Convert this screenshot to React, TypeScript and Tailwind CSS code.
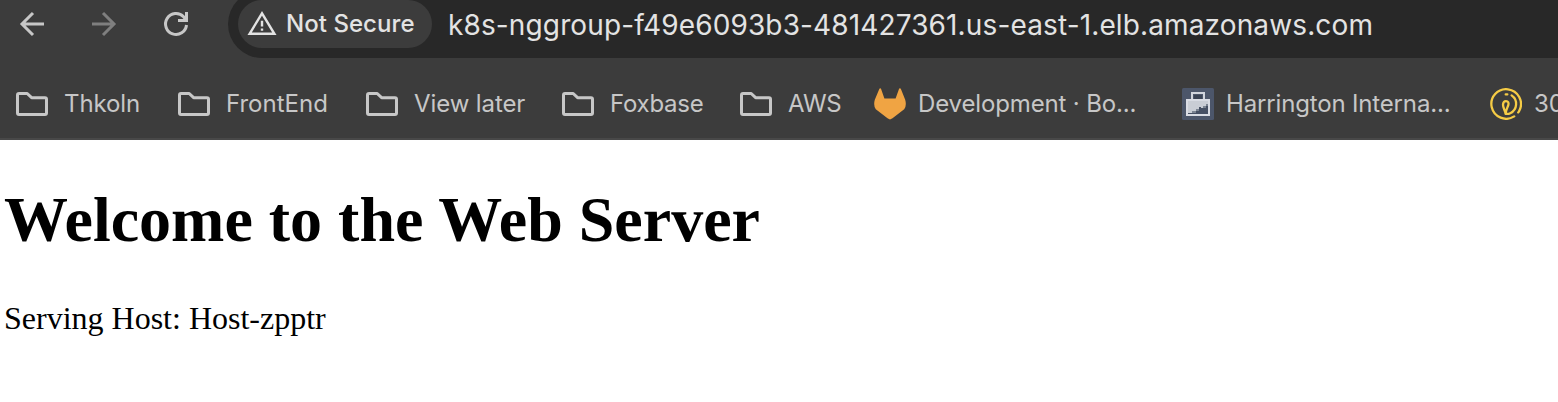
import React from 'react';

const Folder = () => (
  <svg className="block h-8 w-8 shrink-0" viewBox="0 0 32 32" fill="none" stroke="#c7c7c7" strokeWidth="3" strokeLinejoin="round">
    <path d="M3 5.5H11.2L15.6 9.7H29Q30.5 9.7 30.5 11.2V25Q30.5 26.5 29 26.5H3Q1.5 26.5 1.5 25V7Q1.5 5.5 3 5.5Z" />
  </svg>
);

const Fox = () => (
  <svg className="block h-8 w-8 shrink-0" viewBox="0 0 32 32" fill="#f0a443">
    <path d="M6.2 0.2Q6.8 0.2 7.1 1L10.4 10.4H21.6L25 1Q25.3 0.2 25.9 0.2Q26.6 0.2 26.9 1L31.2 11.8Q32.8 17.7 30.2 21.3L18.5 30.2L16 31.6L13.5 30.2L1.8 21.3Q-0.8 17.7 0.8 11.8L5.3 1Q5.6 0.2 6.2 0.2Z" />
  </svg>
);

const CaseIcon = () => (
  <svg className="block h-8 w-8 shrink-0" viewBox="0 0 32 32" fill="none">
    <rect width="32" height="32" rx="1.5" fill="#4c566a" />
    <path d="M10 12V5H22V12" stroke="#d0d4dc" strokeWidth="2" />
    <rect x="12" y="7" width="8" height="4" fill="#3a4354" />
    <rect x="5" y="12" width="22" height="15" fill="#465064" />
    <path d="M6 13H26V16H24V18H21V20H19V19H17V21H14V23H10V25H6Z" fill="#c9cdd5" />
    <path d="M14 21H17V23H14ZM21 18H24V20H21ZM10 23H14V25H10ZM24 16H26V18H24Z" fill="#7b8492" />
    <rect x="5" y="12" width="22" height="15" stroke="#d9dce4" strokeWidth="2" />
  </svg>
);

const CoinIcon = () => (
  <svg className="block h-8 w-8 shrink-0" viewBox="0 0 32 32" fill="none" stroke="#f5cb45" strokeWidth="2.3" strokeLinecap="round">
    <path d="M24.2 28.4A14.8 14.8 0 1 1 29.4 22.6Q28.7 24.1 28.2 24.4" />
    <path d="M21.6 7.4A10.3 10.3 0 0 1 20.3 25.2Q18 26.3 15.6 25.8" />
    <path d="M15.7 6.4H17.3" />
    <path d="M15.7 25.5C14.7 22 12.9 19 13 16.7C13.1 14.3 14.3 13.1 16 13.1C18.2 13.1 19 14.9 18.3 17.2C17.6 19.5 16 21.5 15.7 25.5Z" />
  </svg>
);

const bookmarks = [
  { icon: <Folder />, label: 'Thkoln', box: 'w-[162px] gap-4', text: 'tracking-[-0.1px]' },
  { icon: <Folder />, label: 'FrontEnd', box: 'w-[188px] gap-4', text: 'tracking-[0px]' },
  { icon: <Folder />, label: 'View later', box: 'w-[196px] gap-4', text: 'tracking-[-0.1px]' },
  { icon: <Folder />, label: 'Foxbase', box: 'w-[178px] gap-4', text: 'tracking-[-0.25px]' },
  { icon: <Folder />, label: 'AWS', box: 'w-[134px] gap-4', text: 'tracking-[-0.3px]' },
  { icon: <Fox />, label: 'Development · Bo...', box: 'w-[308px] gap-3', text: 'tracking-[-0.14px]' },
  { icon: <CaseIcon />, label: 'Harrington Interna...', box: 'w-[308px] gap-3', text: 'tracking-[-0.16px]' },
  { icon: <CoinIcon />, label: '30', box: 'w-[68px] gap-3', text: 'tracking-[0px]' },
];

export default function App() {
  return (
    <div className="h-[402px] w-[1558px] overflow-hidden bg-white">
      <header className="h-[140px] overflow-hidden border-b-2 border-[#484848] bg-[#3c3c3c] font-['Inter',sans-serif]">
        <div className="flex h-[58px] items-end">
          <nav className="flex h-12 w-[228px] shrink-0 self-start">
            <svg className="ml-2 h-12 w-12" viewBox="0 0 48 48" fill="none" stroke="#c7c7c7" strokeWidth="3">
              <path d="M36 24H14.5M25 13L14 24L25 35" />
            </svg>
            <svg className="ml-6 h-12 w-12" viewBox="0 0 48 48" fill="none" stroke="#7f7f7f" strokeWidth="3">
              <path d="M12 24H33.5M23 13L34 24L23 35" />
            </svg>
            <svg className="ml-6 h-12 w-12" viewBox="0 0 48 48" fill="none" stroke="#c7c7c7" strokeWidth="3">
              <path d="M34.5 25A10.5 10.5 0 1 1 31.6 16.7L34.2 20M34.5 12V20.5H26" />
            </svg>
          </nav>
          <div className="flex h-[68px] w-[1400px] shrink-0 items-center rounded-l-full bg-[#282828] pl-[10px]">
            <div className="flex h-12 w-[194px] shrink-0 items-center rounded-full bg-[#3c3c3c] pl-[9px] text-[#e3e3e3]">
              <svg className="h-8 w-8 shrink-0" viewBox="0 0 32 32" fill="none" stroke="currentColor" strokeWidth="2.4">
                <path d="M2.6 25.8L15 5.4L27.4 25.8Z" />
                <path d="M15 12.8V18.4M15 20.4V22.8" />
              </svg>
              <span className="ml-[7px] whitespace-nowrap text-2xl font-medium tracking-[0.05px]">Not Secure</span>
            </div>
            <span className="ml-4 whitespace-nowrap pt-px text-[28px] leading-none tracking-[0.13px] text-[#e3e3e3]">
              k8s-nggroup-f49e6093b3-481427361.us-east-1.elb.amazonaws.com
            </span>
          </div>
        </div>
        <div className="flex h-[80px] items-center pt-[12px] pl-4">
          {bookmarks.map((b) => (
            <div key={b.label} className={`flex shrink-0 items-center ${b.box}`}>
              {b.icon}
              <span className={`whitespace-nowrap text-2xl leading-8 text-[#c7c7c7] ${b.text}`}>{b.label}</span>
            </div>
          ))}
        </div>
      </header>
      <main className="flex flex-col pl-1 font-['Liberation_Serif',serif] text-black">
        <h1 className="mt-[43px] text-[64px] leading-[74px] font-bold">Welcome to the Web Server</h1>
        <p className="mt-[43px] text-[32px] leading-[37px]">Serving Host: Host-zpptr</p>
      </main>
    </div>
  );
}
